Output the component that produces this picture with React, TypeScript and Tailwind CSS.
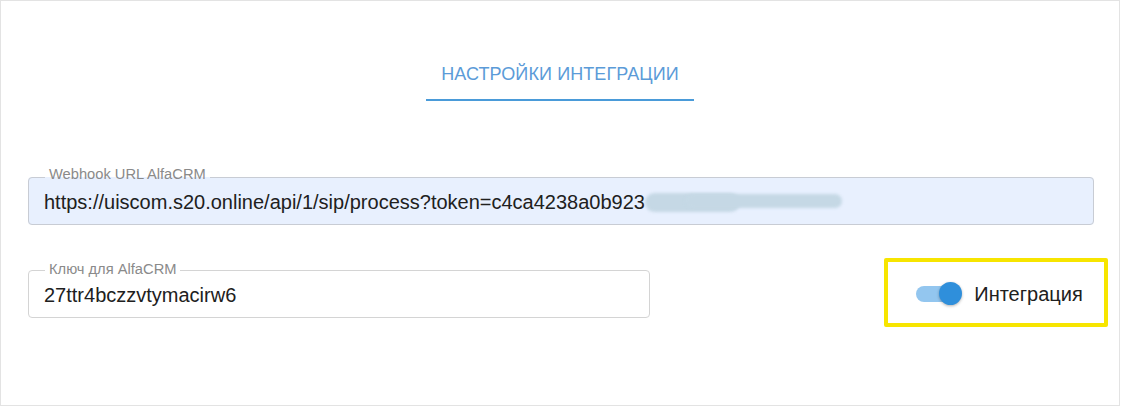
import React from "react";

export default function App() {
  return (
    <div
      className="w-[1121px] h-[407px] bg-white"
      style={{ fontFamily: '"Liberation Sans", Arial, sans-serif' }}
    >
      <div className="w-[1120px] h-[406px] border border-[#e3e3e3] bg-white flex flex-col pl-[27px] pr-[25px]">
        <div className="flex justify-center pt-[63px] pr-[2px]">
          <div className="w-[268px] flex flex-col items-center">
            <div className="text-[18px] leading-[20px] text-[#5b9bd8] tracking-[0.1px]">
              НАСТРОЙКИ ИНТЕГРАЦИИ
            </div>
            <div className="mt-[15px] w-full h-[2px] bg-[#4a9bd9]" />
          </div>
        </div>

        <fieldset className="mt-[69px] h-[55px] border border-[#c8ccd4] rounded-[4px] bg-[#e8f0fe] px-[15px]">
          <legend className="ml-[1px] px-[4px] text-[14.7px] leading-[14px] text-[#8a8a8a]">
            <span className="relative top-[-3px]">Webhook URL AlfaCRM</span>
          </legend>
          <div className="pt-[8px] flex items-start text-[20px] leading-[20px] text-[#202020]">
            <span>https://uiscom.s20.online/api/1/sip/process?token=c4ca4238a0b923</span>
            <div className="relative mt-[1px] w-[197px] h-[19px]">
              <div className="absolute left-0 top-0 w-[95px] h-[19px] rounded-full bg-[#c5d8e5] blur-[1.5px]" />
              <div className="absolute left-[40px] top-[1px] w-[157px] h-[14px] rounded-full bg-[#c5d8e5] blur-[1.5px]" />
            </div>
          </div>
        </fieldset>

        <div className="mt-[38px] flex items-start">
          <fieldset className="w-[622px] h-[55px] border border-[#d4d4d4] rounded-[4px] bg-white px-[15px]">
            <legend className="ml-[1px] px-[4px] text-[14.7px] leading-[14px] text-[#8a8a8a]">
              <span className="relative top-[-1px]">Ключ для AlfaCRM</span>
            </legend>
            <div className="pt-[8px] text-[20px] leading-[20px] text-[#202020]">
              27ttr4bczzvtymacirw6
            </div>
          </fieldset>

          <div className="ml-auto mr-[-14px] mt-[-5px] w-[224px] h-[69px] border-[4px] border-[#f7e500] rounded-[2px] flex items-center justify-center gap-[12px] pl-[7px] pt-[2px]">
            <div className="relative w-[46px] h-[23px] flex items-center">
              <div className="w-[40px] h-[16px] rounded-full bg-[#93c6ef]" />
              <div className="absolute right-0 top-0 w-[23px] h-[23px] rounded-full bg-[#2f8fdb] shadow-[0_1px_3px_rgba(0,0,0,0.3)]" />
            </div>
            <span className="text-[20px] leading-[20px] text-[#202020]">Интеграция</span>
          </div>
        </div>
      </div>
    </div>
  );
}
